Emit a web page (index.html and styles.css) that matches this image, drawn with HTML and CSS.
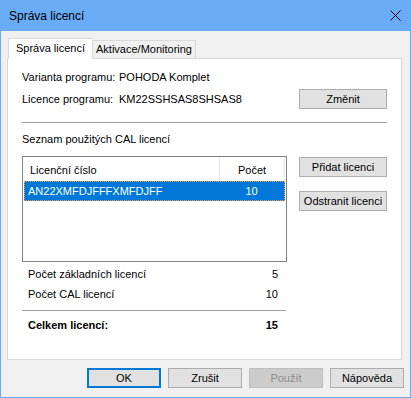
FILE: index.html
```html
<!DOCTYPE html>
<html lang="cs">
<head>
  <meta charset="UTF-8">
  <title>Správa licencí</title>
  <link rel="stylesheet" href="styles.css">
</head>
<body>

<div class="window">
  <div class="titlebar">
    <span class="title">Správa licencí</span>
    <svg class="close" width="11" height="11" viewBox="0 0 11 11">
      <path d="M0.5 0.5 L10.5 10.5 M10.5 0.5 L0.5 10.5" stroke="#000" stroke-width="1" fill="none"/>
    </svg>
  </div>

  <div class="client">
    <div class="tabs">
      <div class="tab active">Správa licencí</div>
      <div class="tab">Aktivace/Monitoring</div>
    </div>

    <div class="panel">
      <div class="row">
        <span class="label">Varianta programu:</span>
        <span>POHODA Komplet</span>
      </div>
      <div class="row second">
        <span class="label">Licence programu:</span>
        <span>KM22SSHSAS8SHSAS8</span>
        <button class="btn side-btn push">Změnit</button>
      </div>

      <div class="sep"></div>

      <div class="caption">Seznam použitých CAL licencí</div>

      <div class="cal">
        <div class="cal-left">
          <div class="listbox">
            <div class="list-head">
              <span class="col-num">Licenční číslo</span>
              <span class="col-count">Počet</span>
            </div>
            <div class="list-row selected">
              <span class="col-num">AN22XMFDJFFFXMFDJFF</span>
              <span class="col-count">10</span>
            </div>
          </div>

          <div class="stat first"><span>Počet základních licencí</span><span>5</span></div>
          <div class="stat"><span>Počet CAL licencí</span><span>10</span></div>
          <div class="sep short"></div>
          <div class="stat total"><span>Celkem licencí:</span><span>15</span></div>
        </div>

        <div class="cal-side">
          <button class="btn side-btn">Přidat licenci</button>
          <button class="btn side-btn">Odstranit licenci</button>
        </div>
      </div>
    </div>

    <div class="footer">
      <button class="btn foot-btn default">OK</button>
      <button class="btn foot-btn">Zrušit</button>
      <button class="btn foot-btn" disabled>Použít</button>
      <button class="btn foot-btn">Nápověda</button>
    </div>
  </div>
</div>

</body>
</html>
```

FILE: styles.css
```css
body {
  margin: 0;
  padding: 0;
  font-family: "Liberation Sans", Arial, sans-serif;
  font-size: 11px;
  color: #000;
  background: #fff;
}

.window {
  width: 411px;
  height: 398px;
  box-sizing: border-box;
  border: 1px solid #69abf5;
  border-top: none;
  background-color: #f0f0f0;
}

.titlebar {
  height: 31px;
  display: flex;
  align-items: center;
  justify-content: space-between;
  padding: 0 9px 0 8px;
  background-color: #69abf5;
  font-size: 12px;
}

.close {
  display: block;
  margin-top: -1px;
}

.client {
  padding: 0 6px;
}

/* tabs */
.tabs {
  display: flex;
  align-items: flex-end;
  padding-top: 7px;
  margin-bottom: -1px;
  padding-left: 1px;
  height: 21px;
}

.tab {
  position: relative;
  box-sizing: border-box;
  height: 18px;
  width: 104px;
  border: 1px solid #d9d9d9;
  border-bottom: none;
  background-color: #f0f0f0;
  text-align: center;
  line-height: 17px;
  margin-bottom: 1px;
}

.tab.active {
  z-index: 1;
  height: 21px;
  width: 84px;
  margin-bottom: 0;
  background-color: #fff;
  line-height: 19px;
  border-right: none;
}

.tab.active + .tab {
  border-left: 1px solid #d9d9d9;
}

/* panel */
.panel {
  box-sizing: border-box;
  height: 302px;
  margin-right: 2px;
  border: 1px solid #d9d9d9;
  background-color: #fff;
  padding: 8px 14px 0 14px;
}

.row {
  display: flex;
  align-items: center;
  height: 20px;
  line-height: 20px;
}

.row.second {
  margin-top: 2px;
}

.label {
  width: 97px;
}

.push {
  margin-left: auto;
}

.sep {
  height: 1px;
  margin-top: 13px;
  background-color: #a0a0a0;
}

.caption {
  margin-top: 6px;
  line-height: 20px;
}

.cal {
  display: grid;
  grid-template-columns: 265px 88px;
  column-gap: 12px;
  margin-top: 7px;
}

/* list */
.listbox {
  box-sizing: border-box;
  height: 106px;
  border: 1px solid #828282;
  background-color: #fff;
}

.list-head {
  display: flex;
  height: 24px;
}

.list-head .col-num {
  box-sizing: border-box;
  width: 197px;
  padding: 2px 0 0 7px;
  line-height: 22px;
  border-right: 1px solid #e5e5e5;
}

.list-head .col-count {
  box-sizing: border-box;
  width: 65px;
  padding-top: 2px;
  line-height: 22px;
  text-align: center;
  border-right: 1px solid #e5e5e5;
}

.list-row {
  display: flex;
  box-sizing: border-box;
  width: 261px;
  height: 20px;
  margin-left: 1px;
  line-height: 18px;
}

.list-row.selected {
  background-color: #0078d7;
  color: #fff;
  border: 1px dotted #f0a048;
}

.list-row .col-num {
  width: 194px;
  padding-left: 3px;
  box-sizing: border-box;
}

.list-row .col-count {
  flex: 1;
  text-align: center;
}

/* totals */
.stat {
  display: flex;
  justify-content: space-between;
  line-height: 20px;
  padding: 0 9px 0 6px;
}

.stat.first {
  margin-top: 2px;
}

.sep.short {
  width: 264px;
  margin-top: 6px;
}

.stat.total {
  margin-top: 4px;
  font-weight: bold;
}

/* buttons */
.btn {
  box-sizing: border-box;
  height: 20px;
  padding: 0;
  border: 1px solid #adadad;
  background-color: #e1e1e1;
  font-family: "Liberation Sans", Arial, sans-serif;
  font-size: 11px;
  color: #000;
}

.btn:disabled {
  background-color: #cccccc;
  border-color: #bfbfbf;
  color: #8d8d8d;
}

.side-btn {
  display: block;
  width: 88px;
}

.cal-side .side-btn {
  margin-top: 1px;
}

.cal-side .side-btn + .side-btn {
  margin-top: 14px;
}

.footer {
  display: flex;
  justify-content: flex-end;
  gap: 7px;
  margin-top: 8px;
}

.foot-btn {
  width: 74px;
}

.foot-btn.default {
  border: 2px solid #0078d7;
}
```
